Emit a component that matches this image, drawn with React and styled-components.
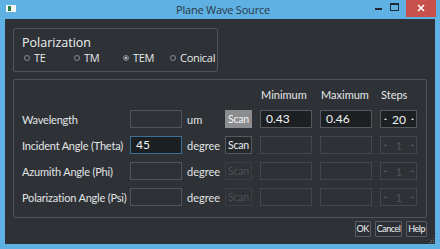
import React from 'react';
import styled, { createGlobalStyle } from 'styled-components';

const GlobalStyle = createGlobalStyle`
  html, body {
    margin: 0;
    padding: 0;
    background: #5eb1e2;
  }
  * {
    box-sizing: border-box;
  }
`;

const rows = [
  { label: 'Wavelength', unit: 'um', value: '', scan: 'active', min: '0.43', max: '0.46', steps: '20' },
  { label: 'Incident Angle (Theta)', unit: 'degree', value: '45', focused: true, scan: 'normal' },
  { label: 'Azumith Angle (Phi)', unit: 'degree', value: '', scan: 'disabled' },
  { label: 'Polarization Angle (Psi)', unit: 'degree', value: '', scan: 'disabled' },
];

const modes = ['TE', 'TM', 'TEM', 'Conical'];

function App() {
  return (
    <>
      <GlobalStyle />
      <Window>
        <TitleBar>
          <AppIcon width="10" height="7" viewBox="0 0 10 7">
            <rect x="0" y="0" width="10" height="7" fill="#f4f6f4" />
            <rect x="2" y="1" width="3" height="5" fill="#2f7a4a" />
          </AppIcon>
          <Title>Plane Wave Source</Title>
          <Controls>
            <CtrlButton>
              <svg width="7" height="2" viewBox="0 0 7 2">
                <rect width="7" height="2" fill="#1e2a36" />
              </svg>
            </CtrlButton>
            <CtrlButton>
              <svg width="9" height="8" viewBox="0 0 9 8">
                <rect x="0.5" y="1" width="8" height="6.5" fill="none" stroke="#1e2a36" />
                <rect x="0" y="0" width="9" height="2" fill="#1e2a36" />
              </svg>
            </CtrlButton>
            <CloseButton>
              <svg width="8" height="8" viewBox="0 0 8 8">
                <path d="M1 1 L7 7 M7 1 L1 7" stroke="#ffffff" strokeWidth="1.6" />
              </svg>
            </CloseButton>
          </Controls>
        </TitleBar>

        <Body>
          <PolarGroup>
            <GroupTitle>Polarization</GroupTitle>
            <RadioRow>
              {modes.map((m) => (
                <Radio key={m}>
                  <RadioDot $checked={m === 'TEM'} />
                  {m}
                </Radio>
              ))}
            </RadioRow>
          </PolarGroup>

          <ParamGroup>
            <ParamGrid>
              <span />
              <span />
              <span />
              <span />
              <Header>Minimum</Header>
              <Header>Maximum</Header>
              <Header>Steps</Header>

              {rows.map((r) => (
                <React.Fragment key={r.label}>
                  <Label>{r.label}</Label>
                  <Field $filled={!!r.value} $focused={r.focused}>{r.value}</Field>
                  <Unit>{r.unit}</Unit>
                  <ScanButton $state={r.scan}>Scan</ScanButton>
                  <Field $filled={!!r.min} $dim={!r.min}>{r.min}</Field>
                  <Field $filled={!!r.max} $dim={!r.max}>{r.max}</Field>
                  <Spin $active={!!r.steps}>
                    <Arrow width="3" height="2" viewBox="0 0 3 2">
                      <path d="M0 2 L1.5 0 L3 2 Z" fill={r.steps ? '#cfd2d4' : '#5a5e62'} />
                    </Arrow>
                    <SpinValue $active={!!r.steps}>{r.steps || '1'}</SpinValue>
                    <Arrow width="3" height="2" viewBox="0 0 3 2">
                      <path d="M0 2 L1.5 0 L3 2 Z" fill={r.steps ? '#cfd2d4' : '#5a5e62'} />
                    </Arrow>
                  </Spin>
                </React.Fragment>
              ))}
            </ParamGrid>
          </ParamGroup>

          <ButtonRow>
            <DialogButton>OK</DialogButton>
            <DialogButton>Cancel</DialogButton>
            <DialogButton>Help</DialogButton>
          </ButtonRow>
          <Grip width="5" height="5" viewBox="0 0 5 5">
            <rect x="4" y="0" width="1" height="1" fill="#6a7076" />
            <rect x="2" y="2" width="1" height="1" fill="#6a7076" />
            <rect x="4" y="2" width="1" height="1" fill="#6a7076" />
            <rect x="0" y="4" width="1" height="1" fill="#6a7076" />
            <rect x="2" y="4" width="1" height="1" fill="#6a7076" />
            <rect x="4" y="4" width="1" height="1" fill="#6a7076" />
          </Grip>
        </Body>
      </Window>
    </>
  );
}

export default App;

const Window = styled.div`
  width: 440px;
  height: 249px;
  background: #5eb1e2;
  display: flex;
  flex-direction: column;
  font-family: Lato, "Open Sans", sans-serif;
  overflow: hidden;
`;

const TitleBar = styled.div`
  height: 19px;
  display: grid;
  grid-template-columns: 1fr auto 1fr;
  align-items: center;
  padding-left: 6px;
`;

const AppIcon = styled.svg`
  display: block;
  margin-top: -3px;
`;

const Title = styled.div`
  font-family: "Open Sans", sans-serif;
  font-size: 11px;
  color: #2a3744;
  letter-spacing: -0.2px;
`;

const Controls = styled.div`
  justify-self: end;
  align-self: start;
  display: flex;
  align-items: flex-start;
  padding-right: 4px;
`;

const CtrlButton = styled.div`
  width: 16px;
  height: 14px;
  display: flex;
  align-items: center;
  justify-content: center;
  &:first-child {
    padding-top: 4px;
  }
`;

const CloseButton = styled.div`
  width: 30px;
  height: 17px;
  background: #c9514c;
  display: flex;
  align-items: center;
  justify-content: center;
  margin-left: 4px;
  padding-bottom: 2px;
`;

const Body = styled.div`
  flex: 1;
  margin: 0 5px 5px;
  background: #2e3236;
  padding: 9px 0 0 8px;
  position: relative;
  color: #e6e8ea;
`;

const GroupBox = styled.div`
  border: 1px solid #50555a;
  border-radius: 2px;
`;

const PolarGroup = styled(GroupBox)`
  width: 205px;
  height: 44px;
  padding: 5px 8px 0;
`;

const GroupTitle = styled.div`
  font-family: "Open Sans", sans-serif;
  font-size: 12.5px;
  line-height: 17px;
  color: #eef0f2;
`;

const RadioRow = styled.div`
  display: grid;
  grid-template-columns: 50px 49px 47px auto;
  padding-left: 2px;
  line-height: 14px;
`;

const Radio = styled.div`
  display: flex;
  align-items: center;
  gap: 4px;
  font-family: "Open Sans", sans-serif;
  font-size: 11px;
  letter-spacing: -0.3px;
  color: #e6e8ea;
`;

const RadioDot = styled.span`
  width: 6px;
  height: 6px;
  border-radius: 50%;
  border: 1px solid #8a8e92;
  background: ${({ $checked }) => ($checked ? 'radial-gradient(circle, #b8bcc0 45%, #2e3236 60%)' : 'transparent')};
`;

const ParamGroup = styled(GroupBox)`
  margin-top: 7px;
  width: 414px;
  height: 139px;
  padding: 7px 0 0 8px;
`;

const ParamGrid = styled.div`
  display: grid;
  grid-template-columns: 108px 52px 43px 35px 60px 60px 37px;
  grid-template-rows: 15px repeat(4, 18px);
  row-gap: 8px;
  align-items: center;
`;

const Header = styled.div`
  font-size: 11px;
  padding-left: 1px;
  color: #e6e8ea;
`;

const Label = styled.div`
  font-size: 11px;
  letter-spacing: -0.2px;
  color: #e2e4e6;
  white-space: nowrap;
`;

const Unit = styled.div`
  font-size: 11px;
  padding-left: 5px;
  color: #e2e4e6;
`;

const Field = styled.div`
  width: 52px;
  height: 18px;
  border: 1px solid ${({ $focused, $filled, $dim }) =>
    $focused ? '#3f6f95' : $filled ? '#55595e' : $dim ? '#44484c' : '#50555a'};
  background: ${({ $filled }) => ($filled ? '#1d2023' : 'transparent')};
  font-size: 12px;
  line-height: 16px;
  padding-left: 5px;
  color: #f2f4f6;
`;

const scanStyles = {
  active: 'background: #8b8d8f; border-color: #8b8d8f; color: #f4f4f4;',
  normal: 'background: #25292c; border-color: #55595e; color: #eef0f2;',
  disabled: 'background: transparent; border-color: #3a3e42; color: #4c5054;',
};

const ScanButton = styled.div`
  width: 27px;
  height: 18px;
  border: 1px solid;
  font-size: 10.5px;
  letter-spacing: -0.2px;
  line-height: 16px;
  text-align: center;
  ${({ $state }) => scanStyles[$state]}
`;

const Spin = styled.div`
  width: 37px;
  height: 18px;
  border: 1px solid ${({ $active }) => ($active ? '#55595e' : '#44484c')};
  background: ${({ $active }) => ($active ? '#1d2023' : 'transparent')};
  display: flex;
  align-items: center;
  justify-content: space-between;
  padding: 0 2px 0 3px;
`;

const Arrow = styled.svg`
  display: block;
`;

const SpinValue = styled.span`
  font-size: 12px;
  color: ${({ $active }) => ($active ? '#f2f4f6' : '#4c5054')};
`;

const ButtonRow = styled.div`
  display: flex;
  justify-content: flex-end;
  gap: 4px;
  margin-top: 3px;
  padding-right: 8px;
`;

const DialogButton = styled.div`
  height: 16px;
  border: 1px solid #5a5e62;
  border-radius: 1px;
  background: #2b2f33;
  padding: 0 1px;
  font-size: 9px;
  line-height: 14px;
  color: #f0f2f4;
  letter-spacing: -0.5px;
`;

const Grip = styled.svg`
  position: absolute;
  right: 1px;
  bottom: 1px;
`;
